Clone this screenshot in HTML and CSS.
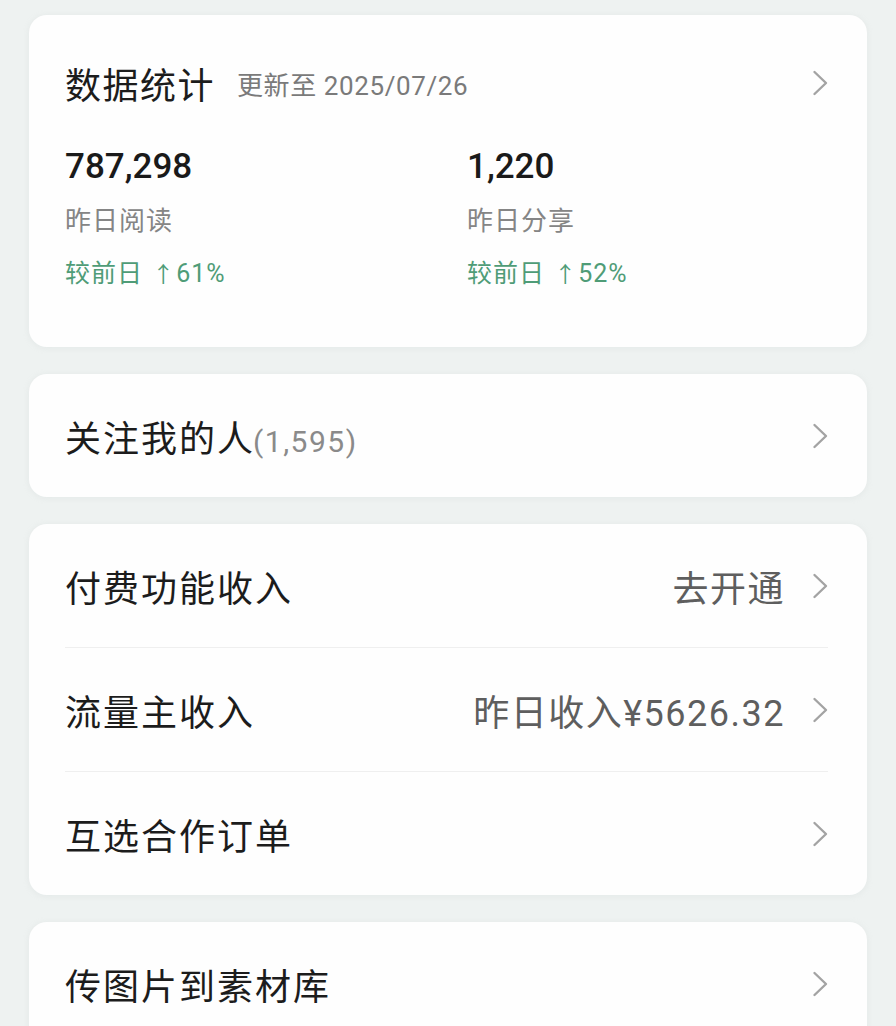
FILE: index.html
```html
<!DOCTYPE html>
<html lang="zh-CN">
<head>
<meta charset="utf-8">
<title>数据统计</title>
<link rel="stylesheet" href="styles.css">
</head>
<body>
<main class="page">
  <section class="card stats">
    <div class="stats-head">
      <div class="head-text">
        <span class="title">数据统计</span>
        <span class="updated">更新至 2025/07/26</span>
      </div>
      <svg class="chev" viewBox="0 0 16 26" width="16" height="26"><polyline points="2.5,2 14,13 2.5,24"/></svg>
    </div>
    <div class="stats-grid">
      <div class="stat">
        <div class="stat-value">787,298</div>
        <div class="stat-label">昨日阅读</div>
        <div class="stat-change">较前日 <span class="arrow">↑</span>61%</div>
      </div>
      <div class="stat">
        <div class="stat-value">1,220</div>
        <div class="stat-label">昨日分享</div>
        <div class="stat-change">较前日 <span class="arrow">↑</span>52%</div>
      </div>
    </div>
  </section>

  <section class="card">
    <div class="row row-single">
      <span class="row-title">关注我的人<span class="count">(1,595)</span></span>
      <svg class="chev" viewBox="0 0 16 26" width="16" height="26"><polyline points="2.5,2 14,13 2.5,24"/></svg>
    </div>
  </section>

  <section class="card">
    <div class="row">
      <span class="row-title">付费功能收入</span>
      <span class="row-right"><span class="row-value">去开通</span><svg class="chev" viewBox="0 0 16 26" width="16" height="26"><polyline points="2.5,2 14,13 2.5,24"/></svg></span>
    </div>
    <div class="row">
      <span class="row-title">流量主收入</span>
      <span class="row-right"><span class="row-value">昨日收入¥5626.32</span><svg class="chev" viewBox="0 0 16 26" width="16" height="26"><polyline points="2.5,2 14,13 2.5,24"/></svg></span>
    </div>
    <div class="row">
      <span class="row-title">互选合作订单</span>
      <svg class="chev" viewBox="0 0 16 26" width="16" height="26"><polyline points="2.5,2 14,13 2.5,24"/></svg>
    </div>
  </section>

  <section class="card">
    <div class="row">
      <span class="row-title">传图片到素材库</span>
      <svg class="chev" viewBox="0 0 16 26" width="16" height="26"><polyline points="2.5,2 14,13 2.5,24"/></svg>
    </div>
  </section>
</main>
</body>
</html>
```

FILE: styles.css
```css
html, body {
  margin: 0;
  padding: 0;
  background: #eef2f1;
}

body {
  font-family: Roboto, "Noto Sans CJK SC", sans-serif;
  color: #1c1c1c;
  overflow: hidden;
}

.page {
  display: flex;
  flex-direction: column;
  gap: 27px;
  padding: 15px 29px 0 29px;
}

.card {
  background: #fefefe;
  border-radius: 18px;
  box-shadow: 0 1px 6px rgba(180, 190, 188, 0.18);
  padding: 0 39px 0 36px;
}

.chev {
  flex: none;
  display: block;
}

.chev polyline {
  fill: none;
  stroke: #a3a3a3;
  stroke-width: 2.4;
  stroke-linecap: round;
  stroke-linejoin: round;
}

/* stats card */
.stats {
  padding-top: 44px;
  padding-bottom: 54px;
}

.stats-head {
  display: flex;
  align-items: center;
  justify-content: space-between;
  height: 48px;
}

.head-text {
  display: flex;
  align-items: center;
  gap: 22px;
}

.title {
  font-size: 36px;
  letter-spacing: 1.5px;
  color: #1c1c1c;
}

.updated {
  font-size: 26px;
  color: #7a7a7a;
  letter-spacing: 0.6px;
}

.stats-grid {
  display: grid;
  grid-template-columns: 402px 1fr;
  margin-top: 38px;
}

.stat-value {
  font-size: 35px;
  font-weight: 500;
  line-height: 44px;
  color: #1a1a1a;
}

.stat-label {
  font-size: 26px;
  line-height: 36px;
  margin-top: 14px;
  color: #858585;
  letter-spacing: 1px;
}

.stat-change {
  font-size: 25px;
  line-height: 36px;
  margin-top: 17px;
  color: #4f9c77;
  letter-spacing: 1px;
}

.arrow {
  font-size: 22px;
  margin-left: 2px;
  margin-right: 1px;
}

/* list rows */
.row {
  display: flex;
  align-items: center;
  justify-content: space-between;
  height: 123px;
  border-top: 1px solid #efefef;
}

.row:first-child {
  border-top: none;
}

.row-title {
  font-size: 36px;
  letter-spacing: 2px;
  color: #1c1c1c;
}

.count {
  font-size: 30px;
  letter-spacing: 1.5px;
  color: #8a8a8a;
  margin-left: -2px;
}

.row-right {
  display: flex;
  align-items: center;
  gap: 27px;
}

.row-value {
  font-size: 36px;
  color: #5e5e5e;
  letter-spacing: 1.5px;
}
```
